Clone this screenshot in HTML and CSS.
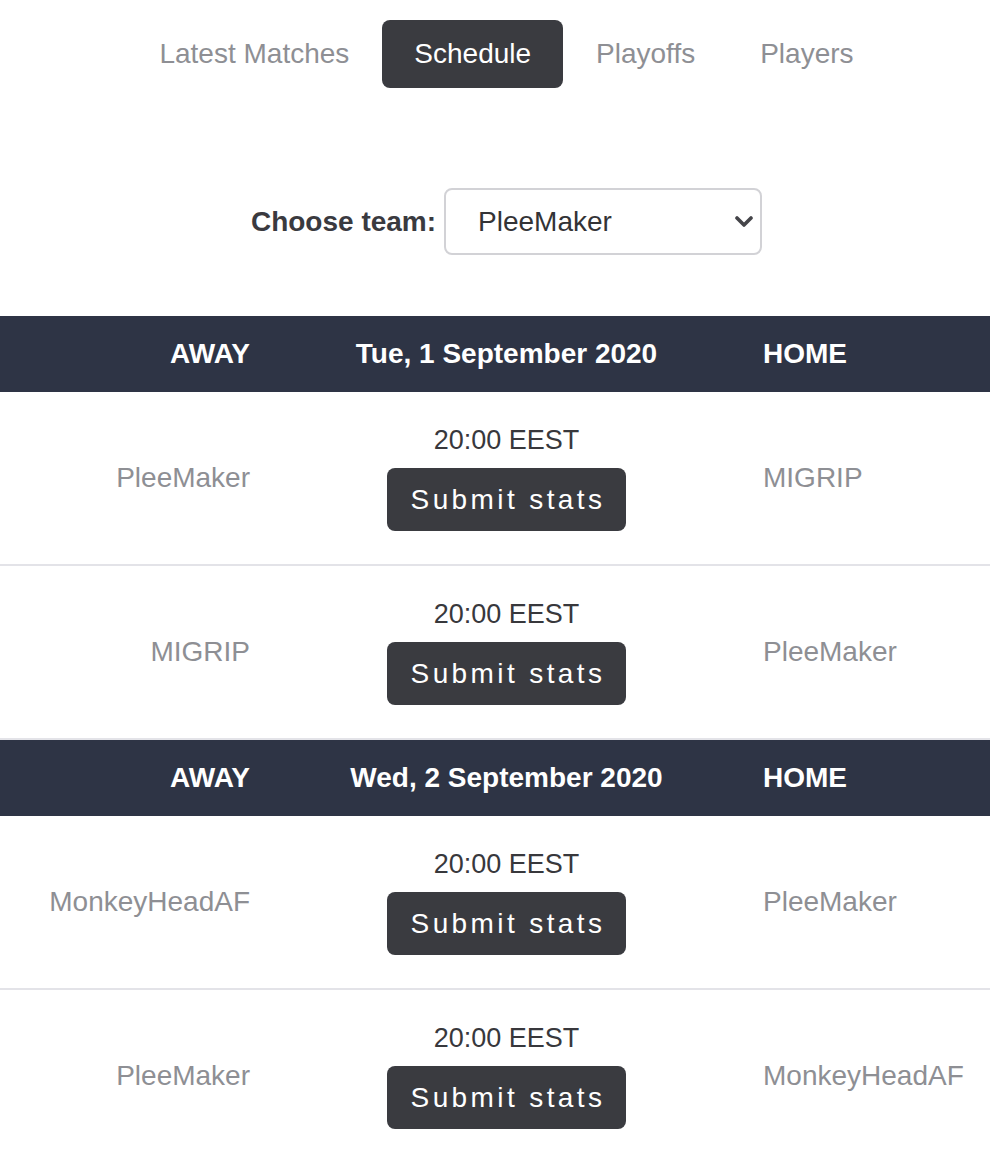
FILE: index.html
```html
<!DOCTYPE html>
<html lang="en">
<head>
    <meta charset="UTF-8">
    <meta name="viewport" content="width=device-width, initial-scale=1.0">
    <title>Schedule</title>
    <link rel="stylesheet" href="styles.css">
</head>
<body>
    <div class="page">
        <nav class="tabs">
            <a class="tab">Latest Matches</a>
            <a class="tab active">Schedule</a>
            <a class="tab">Playoffs</a>
            <a class="tab">Players</a>
        </nav>

        <div class="team-picker">
            <label for="team">Choose team:</label>
            <div class="select-wrap">
                <select id="team">
                    <option>PleeMaker</option>
                    <option>MIGRIP</option>
                    <option>MonkeyHeadAF</option>
                </select>
                <svg class="chevron" width="18" height="12" viewBox="0 0 18 12">
                    <path d="M2 2 L9 9 L16 2" fill="none" stroke="#454549" stroke-width="3.6" stroke-linecap="round" stroke-linejoin="round"/>
                </svg>
            </div>
        </div>

        <div class="schedule">
            <div class="day-head">
                <div class="away">AWAY</div>
                <div class="mid">Tue, 1 September 2020</div>
                <div class="home">HOME</div>
            </div>
            <div class="match">
                <div class="away">PleeMaker</div>
                <div class="mid">
                    <div class="time">20:00 EEST</div>
                    <button class="submit">Submit stats</button>
                </div>
                <div class="home">MIGRIP</div>
            </div>
            <div class="match">
                <div class="away">MIGRIP</div>
                <div class="mid">
                    <div class="time">20:00 EEST</div>
                    <button class="submit">Submit stats</button>
                </div>
                <div class="home">PleeMaker</div>
            </div>

            <div class="day-head">
                <div class="away">AWAY</div>
                <div class="mid">Wed, 2 September 2020</div>
                <div class="home">HOME</div>
            </div>
            <div class="match">
                <div class="away">MonkeyHeadAF</div>
                <div class="mid">
                    <div class="time">20:00 EEST</div>
                    <button class="submit">Submit stats</button>
                </div>
                <div class="home">PleeMaker</div>
            </div>
            <div class="match">
                <div class="away">PleeMaker</div>
                <div class="mid">
                    <div class="time">20:00 EEST</div>
                    <button class="submit">Submit stats</button>
                </div>
                <div class="home">MonkeyHeadAF</div>
            </div>
        </div>
    </div>
</body>
</html>
```

FILE: styles.css
```css
html, body {
    margin: 0;
    overflow-x: hidden;
}
body {
    font-family: "Liberation Sans", Arial, sans-serif;
    background: #fff;
    color: #333336;
}
.page {
    width: 1013px;
}
.tabs {
    display: flex;
    justify-content: center;
    gap: 1px;
    margin-top: 20px;
}
.tab {
    padding: 0 32px;
    height: 68px;
    line-height: 68px;
    font-size: 28px;
    color: #8e8f94;
    border-radius: 8px;
    cursor: pointer;
}
.tab.active {
    background: #3a3b40;
    color: #fff;
}
.team-picker {
    display: flex;
    justify-content: center;
    align-items: center;
    gap: 8px;
    margin-top: 100px;
}
.team-picker label {
    font-size: 28px;
    font-weight: bold;
    color: #3a3a3f;
}
.select-wrap {
    position: relative;
}
.select-wrap select {
    appearance: none;
    -webkit-appearance: none;
    width: 318px;
    height: 67px;
    padding: 0 40px 0 32px;
    border: 2px solid #d2d2d6;
    border-radius: 8px;
    background: #fff;
    font-family: inherit;
    font-size: 28px;
    color: #333336;
}
.chevron {
    position: absolute;
    right: 9px;
    top: 28px;
    pointer-events: none;
}
.schedule {
    margin-top: 61px;
}
.day-head,
.match {
    display: grid;
    grid-template-columns: 270px 473px 270px;
    align-items: center;
}
.day-head {
    height: 76px;
    background: #2e3445;
    color: #fff;
    font-size: 28px;
    font-weight: bold;
}
.match {
    padding: 32px 0 33px;
    border-bottom: 2px solid #e3e3e8;
    font-size: 28px;
}
.away {
    text-align: right;
    padding-right: 20px;
}
.home {
    text-align: left;
    padding-left: 20px;
}
.mid {
    text-align: center;
}
.match .away,
.match .home {
    color: #8e8f94;
}
.time {
    font-size: 27px;
    line-height: 32px;
    color: #38383c;
}
.submit {
    margin-top: 12px;
    height: 63px;
    padding: 0 21px 0 24px;
    border: none;
    border-radius: 8px;
    background: #3a3b40;
    color: #fff;
    font-family: inherit;
    font-size: 28px;
    letter-spacing: 3.4px;
    cursor: pointer;
}
```
